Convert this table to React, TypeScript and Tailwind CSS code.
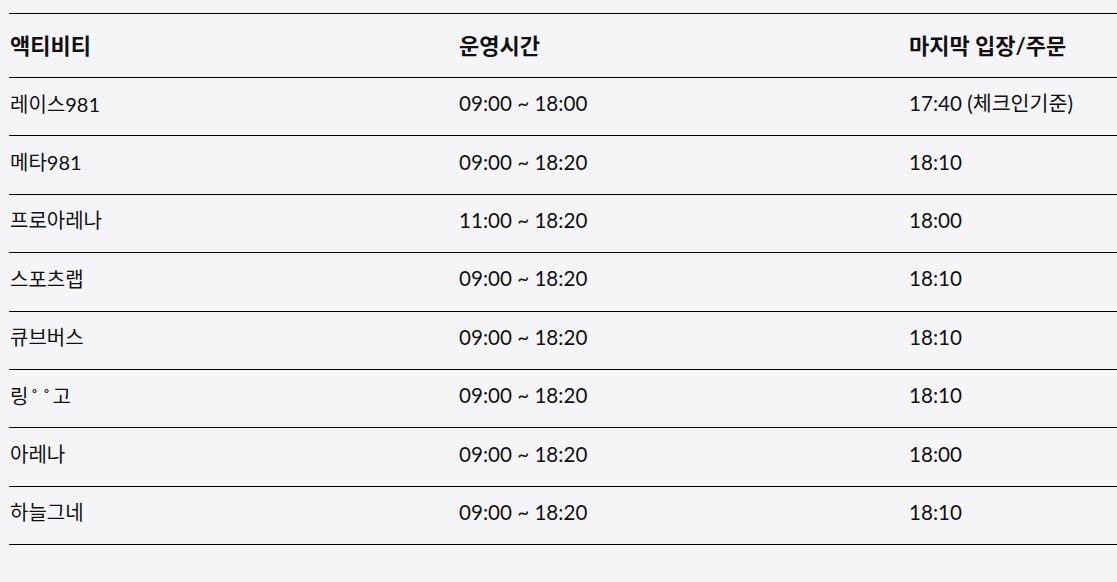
import type { ReactNode } from "react";

const ring = (
  <>
    <span className="inline-block w-[12px] text-center">˚</span>
    <span className="inline-block w-[12px] text-center">˚</span>
  </>
);

const rows: { name: ReactNode; hours: string; last: string }[] = [
  { name: "레이스981", hours: "09:00 ~ 18:00", last: "17:40 (체크인기준)" },
  { name: "메타981", hours: "09:00 ~ 18:20", last: "18:10" },
  { name: "프로아레나", hours: "11:00 ~ 18:20", last: "18:00" },
  { name: "스포츠랩", hours: "09:00 ~ 18:20", last: "18:10" },
  { name: "큐브버스", hours: "09:00 ~ 18:20", last: "18:10" },
  { name: <>링{ring}고</>, hours: "09:00 ~ 18:20", last: "18:10" },
  { name: "아레나", hours: "09:00 ~ 18:20", last: "18:00" },
  { name: "하늘그네", hours: "09:00 ~ 18:20", last: "18:10" },
];

export default function App() {
  return (
    <div
      className="min-h-screen w-full overflow-hidden bg-[#f5f5f7] pt-[13px] pl-[9px] text-[#111]"
      style={{ fontFamily: '"Lato", "Noto Sans CJK KR", sans-serif' }}
    >
      <div className="w-[1350px] border-t border-black">
        <div className="grid h-[64px] grid-cols-[450px_450px_450px] items-center border-b border-black text-[22px] font-bold">
          <div className="pl-px">액티비티</div>
          <div>운영시간</div>
          <div>마지막 입장/주문</div>
        </div>
        {rows.map((r, i) => (
          <div
            key={i}
            className="grid h-[58.4px] grid-cols-[450px_450px_450px] items-center border-b border-black pb-[6px] text-[20.6px]"
          >
            <div className="pl-px text-[20px]">{r.name}</div>
            <div>{r.hours}</div>
            <div>{r.last}</div>
          </div>
        ))}
      </div>
    </div>
  );
}
